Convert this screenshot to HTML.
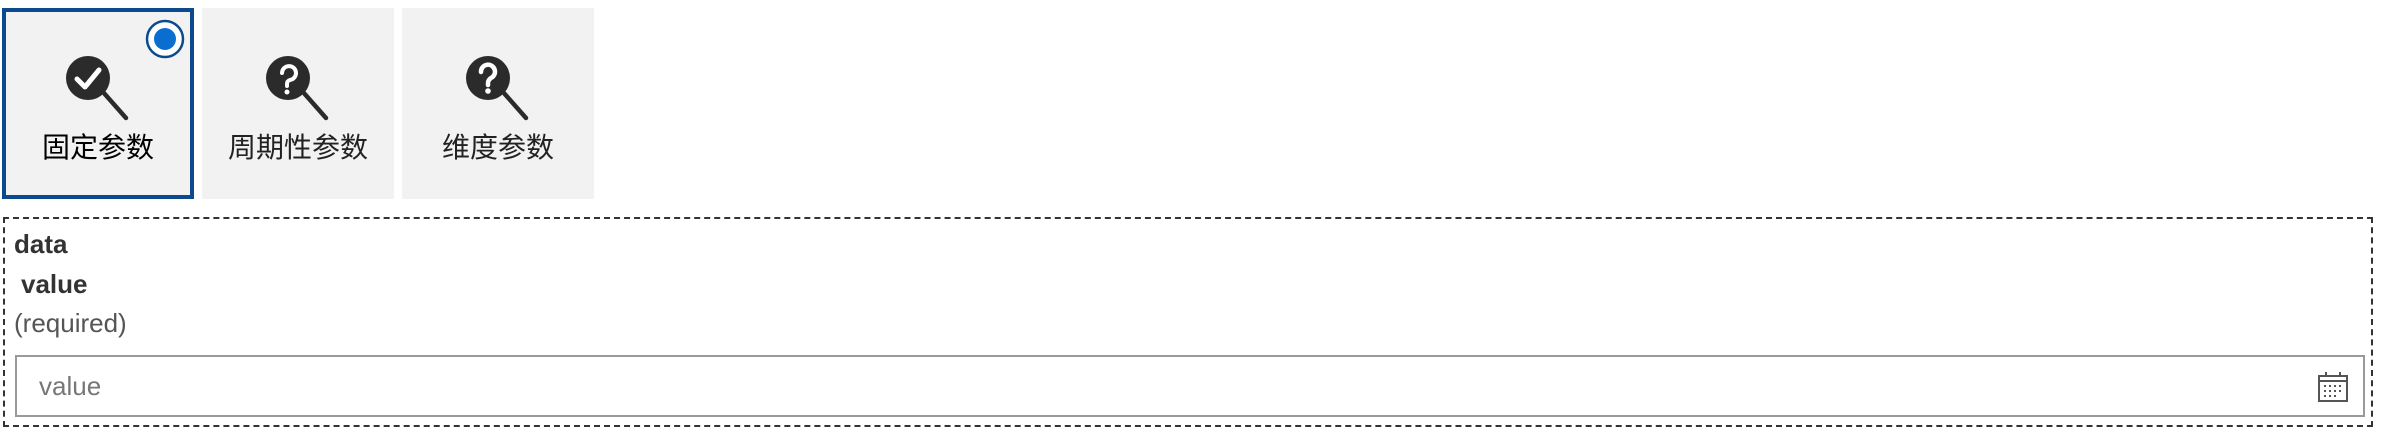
<!DOCTYPE html>
<html><head><meta charset="utf-8"><style>
body{margin:0;width:2382px;height:430px;background:#fff;position:relative;overflow:hidden;font-family:"Liberation Sans","Noto Sans CJK SC",sans-serif;}
.tile{position:absolute;top:8px;width:192px;height:191px;background:#f2f2f2;box-sizing:border-box;}
.tile.sel{border:4px solid #0b4a8e;}
.tile svg.ic{position:absolute;left:50%;margin-left:-40px;top:42px;}
.lbl{position:absolute;left:0;right:0;top:118px;text-align:center;font-size:28px;color:#222;}
.sel .lbl{color:#000;top:114px}
.sel svg.ic{top:38px}
.box{position:absolute;left:3px;top:217px;width:2370px;height:210px;box-sizing:border-box;border:2px dashed #333;}
.t{position:absolute;font-size:26px;color:#333;}
.inp{position:absolute;left:10px;top:136px;width:2350px;height:62px;box-sizing:border-box;border:2px solid #9a9a9a;}
</style></head><body>
<div class="tile sel" style="left:2px">
 <svg style="position:absolute;left:138px;top:6px" width="42" height="42"><circle cx="21" cy="21" r="18" fill="#fff" stroke="#0b4a8e" stroke-width="2.5"/><circle cx="21" cy="21" r="11" fill="#0a6ed1"/></svg>
 <svg class="ic" width="80" height="80" viewBox="0 0 80 80"><line x1="45" y1="42" x2="68" y2="68" stroke="#2b2b2b" stroke-width="4.5" stroke-linecap="round"/><circle cx="30" cy="28" r="22" fill="#2b2b2b"/><path d="M19 29 L27 37 L41 20" fill="none" stroke="#fff" stroke-width="5" stroke-linecap="round" stroke-linejoin="round"/></svg>
 <div class="lbl">固定参数</div>
</div>
<div class="tile" style="left:202px">
 <svg class="ic" width="80" height="80" viewBox="0 0 80 80"><line x1="45" y1="42" x2="68" y2="68" stroke="#2b2b2b" stroke-width="4.5" stroke-linecap="round"/><circle cx="30" cy="28" r="22" fill="#2b2b2b"/><path d="M24 23 a7 7 0 1 1 8 7 q-3 1-3 4 v2" fill="none" stroke="#fff" stroke-width="4" stroke-linecap="round"/><circle cx="29" cy="42" r="2.5" fill="#fff"/></svg>
 <div class="lbl">周期性参数</div>
</div>
<div class="tile" style="left:402px">
 <svg class="ic" width="80" height="80" viewBox="0 0 80 80"><line x1="45" y1="42" x2="68" y2="68" stroke="#2b2b2b" stroke-width="4.5" stroke-linecap="round"/><circle cx="30" cy="28" r="22" fill="#2b2b2b"/><path d="M23 22 a7 7 0 1 1 10 6 q-3 2-3 5 v2" fill="none" stroke="#fff" stroke-width="4.5" stroke-linecap="round"/><circle cx="30" cy="41" r="2.8" fill="#fff"/></svg>
 <div class="lbl">维度参数</div>
</div>
<div class="box">
 <div class="t" style="left:9px;top:10px;font-weight:bold;">data</div>
 <div class="t" style="left:16px;top:50px;font-weight:bold;">value</div>
 <div class="t" style="left:9px;top:89px;color:#555;">(required)</div>
 <div class="inp">
  <div class="t" style="left:22px;top:14px;color:#777;">value</div>
  <svg style="position:absolute;right:14px;top:14px" width="32" height="32" viewBox="0 0 32 32"><rect x="2" y="5" width="28" height="25" fill="none" stroke="#555" stroke-width="2"/><line x1="2" y1="10" x2="30" y2="10" stroke="#555" stroke-width="2"/><line x1="9" y1="1" x2="9" y2="6" stroke="#555" stroke-width="2"/><line x1="23" y1="1" x2="23" y2="6" stroke="#555" stroke-width="2"/><g fill="#555"><rect x="7" y="14" width="2" height="2"/><rect x="12" y="14" width="2" height="2"/><rect x="17" y="14" width="2" height="2"/><rect x="22" y="14" width="2" height="2"/><rect x="7" y="19" width="2" height="2"/><rect x="12" y="19" width="2" height="2"/><rect x="17" y="19" width="2" height="2"/><rect x="22" y="19" width="2" height="2"/><rect x="7" y="24" width="2" height="2"/><rect x="12" y="24" width="2" height="2"/><rect x="17" y="24" width="2" height="2"/></g></svg>
 </div>
</div>
</body></html>
